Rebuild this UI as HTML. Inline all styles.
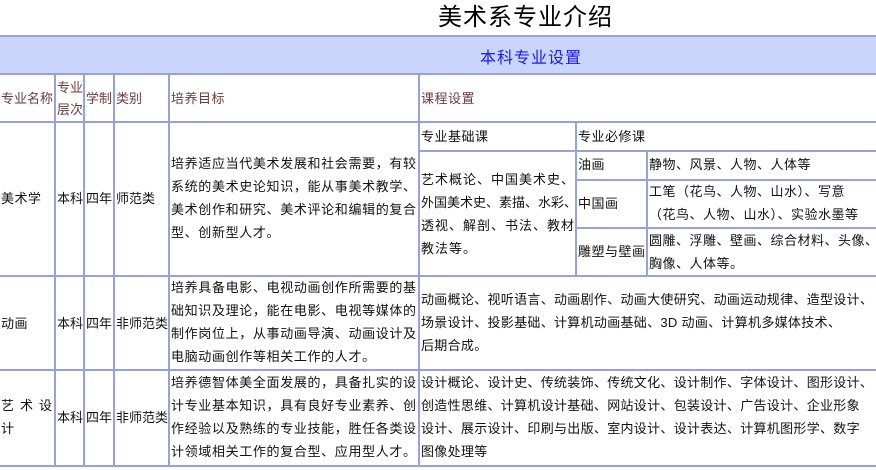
<!DOCTYPE html>
<html><head><meta charset="utf-8"><style>
body{margin:0;width:876px;height:470px;overflow:hidden;background:#fff;position:relative;font-family:"Liberation Sans","Noto Sans CJK SC","WenQuanYi Zen Hei",sans-serif;}
.h{position:absolute;height:2px;background:#97a3d6}
.v{position:absolute;width:2px;background:#97a3d6}
.t{position:absolute;font-size:13px;white-space:nowrap;color:#111;letter-spacing:0.5px;line-height:23px}
.r{color:#6b3b3b}
.p{position:absolute;font-size:13px;line-height:23px;color:#111;white-space:nowrap;letter-spacing:0.65px}
</style></head><body>
<div style="position:absolute;left:438px;top:-3px;font-size:24px;color:#000;letter-spacing:1px">美术系专业介绍</div>
<div style="position:absolute;left:0;top:36px;width:876px;height:38px;background:#c9d5fa"></div>
<div style="position:absolute;left:480px;top:44px;font-size:16px;color:#1a1aff;letter-spacing:1px">本科专业设置</div>
<div class="h" style="left:0;top:35px;width:876px"></div>
<div class="h" style="left:0;top:73px;width:876px"></div>
<div class="h" style="left:0;top:121px;width:876px"></div>
<div class="h" style="left:420px;top:150px;width:456px"></div>
<div class="h" style="left:576px;top:179px;width:300px"></div>
<div class="h" style="left:576px;top:227px;width:300px"></div>
<div class="h" style="left:0;top:275px;width:876px"></div>
<div class="h" style="left:0;top:369px;width:876px"></div>
<div class="h" style="left:0;top:465px;width:876px"></div>
<div class="v" style="left:54px;top:74px;height:392px"></div>
<div class="v" style="left:83px;top:74px;height:392px"></div>
<div class="v" style="left:113px;top:74px;height:392px"></div>
<div class="v" style="left:168px;top:74px;height:392px"></div>
<div class="v" style="left:418px;top:74px;height:392px"></div>
<div class="v" style="left:575px;top:122px;height:154px"></div>
<div class="v" style="left:646px;top:151px;height:125px"></div>
<div class="t r" style="left:1px;top:87px;letter-spacing:0">专业名称</div>
<div class="t r" style="left:57px;top:77px;letter-spacing:0;line-height:22px">专业<br>层次</div>
<div class="t r" style="left:86px;top:87px;letter-spacing:0">学制</div>
<div class="t r" style="left:116px;top:87px;letter-spacing:0">类别</div>
<div class="t r" style="left:171px;top:87px">培养目标</div>
<div class="t r" style="left:421px;top:87px">课程设置</div>
<div class="t" style="left:1px;top:187px">美术学</div>
<div class="t" style="left:57px;top:187px;letter-spacing:0">本科</div>
<div class="t" style="left:86px;top:187px;letter-spacing:0">四年</div>
<div class="t" style="left:116px;top:187px;letter-spacing:0">师范类</div>
<div class="p" style="left:171px;top:152px">培养适应当代美术发展和社会需要，有较<br>系统的美术史论知识，能从事美术教学、<br>美术创作和研究、美术评论和编辑的复合<br>型、创新型人才。</div>
<div class="t" style="left:421px;top:125px">专业基础课</div>
<div class="t" style="left:578px;top:125px">专业必修课</div>
<div class="p" style="left:421px;top:168px;letter-spacing:1px">艺术概论、中国美术史、</div>
<div class="p" style="left:421px;top:191px;letter-spacing:0">外国美术史、素描、水彩、</div>
<div class="p" style="left:421px;top:214px;letter-spacing:1px">透视、解剖、书法、教材<br>教法等。</div>
<div class="t" style="left:578px;top:153px">油画</div>
<div class="t" style="left:649px;top:153px">静物、风景、人物、人体等</div>
<div class="t" style="left:578px;top:192px">中国画</div>
<div class="t" style="left:649px;top:180px">工笔（花鸟、人物、山水）、写意<br>（花鸟、人物、山水）、实验水墨等</div>
<div class="t" style="left:578px;top:240px">雕塑与壁画</div>
<div class="t" style="left:649px;top:229px">圆雕、浮雕、壁画、综合材料、头像、<br>胸像、人体等。</div>
<div class="t" style="left:1px;top:312px">动画</div>
<div class="t" style="left:57px;top:312px;letter-spacing:0">本科</div>
<div class="t" style="left:86px;top:312px;letter-spacing:0">四年</div>
<div class="t" style="left:116px;top:312px;letter-spacing:0">非师范类</div>
<div class="p" style="left:171px;top:276px">培养具备电影、电视动画创作所需要的基<br>础知识及理论，能在电影、电视等媒体的<br>制作岗位上，从事动画导演、动画设计及<br>电脑动画创作等相关工作的人才。</div>
<div class="t" style="left:421px;top:288px;letter-spacing:0.3px">动画概论、视听语言、动画剧作、动画大使研究、动画运动规律、造型设计、<br>场景设计、投影基础、计算机动画基础、3D 动画、计算机多媒体技术、<br>后期合成。</div>
<div class="p" style="left:1px;top:394px;letter-spacing:6px">艺术设<br>计</div>
<div class="t" style="left:57px;top:406px;letter-spacing:0">本科</div>
<div class="t" style="left:86px;top:406px;letter-spacing:0">四年</div>
<div class="t" style="left:116px;top:406px;letter-spacing:0">非师范类</div>
<div class="p" style="left:171px;top:371px">培养德智体美全面发展的，具备扎实的设<br>计专业基本知识，具有良好专业素养、创<br>作经验以及熟练的专业技能，胜任各类设<br>计领域相关工作的复合型、应用型人才。</div>
<div class="t" style="left:421px;top:371px;letter-spacing:0.3px">设计概论、设计史、传统装饰、传统文化、设计制作、字体设计、图形设计、<br>创造性思维、计算机设计基础、网站设计、包装设计、广告设计、企业形象<br>设计、展示设计、印刷与出版、室内设计、设计表达、计算机图形学、数字<br>图像处理等</div>
</body></html>
